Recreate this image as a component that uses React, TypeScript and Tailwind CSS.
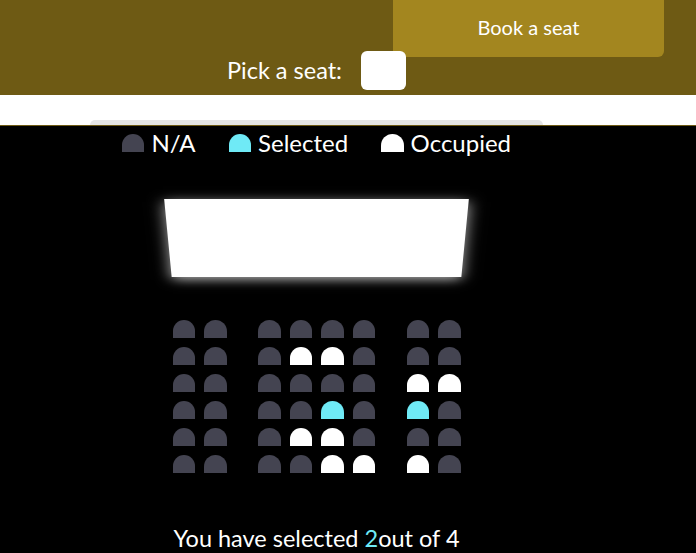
type SeatState = "na" | "sel" | "occ";

const seatColor: Record<SeatState, string> = {
  na: "bg-[#444451]",
  sel: "bg-[#6feaf6]",
  occ: "bg-white",
};

const rows: SeatState[][] = [
  ["na", "na", "na", "na", "na", "na", "na", "na"],
  ["na", "na", "na", "occ", "occ", "na", "na", "na"],
  ["na", "na", "na", "na", "na", "na", "occ", "occ"],
  ["na", "na", "na", "na", "sel", "na", "sel", "na"],
  ["na", "na", "na", "occ", "occ", "na", "na", "na"],
  ["na", "na", "na", "na", "occ", "occ", "occ", "na"],
];

const Seat = ({ state, className = "" }: { state: SeatState; className?: string }) => (
  <div className={`w-[22.5px] h-[18px] rounded-t-[15px] ${seatColor[state]} ${className}`} />
);

const App = () => {
  const selected = rows.flat().filter((s) => s === "sel").length;

  return (
    <div className="w-[696px] h-[553px] overflow-hidden bg-black font-['Lato','Noto_Sans',sans-serif] text-white">
      {/* header */}
      <div className="h-[95px] bg-[#6e5a14]">
        <div className="flex justify-end pr-[32px]">
          <button className="w-[271px] h-[57px] rounded-b-[6px] bg-[#a3861f] text-[20px] text-white pb-[4px]">
            Book a seat
          </button>
        </div>
        <div className="flex items-center h-[39px] mt-[-6px] pl-[227px]">
          <span className="text-[23.5px] leading-none">Pick a seat:</span>
          <div className="relative w-[45px] h-[39px] ml-[19px] rounded-[6px] bg-white" />
        </div>
      </div>

      <div className="h-[30px] bg-white flex flex-col justify-end">
        <div className="w-[453px] h-[5px] ml-[90px] rounded-t-[6px] bg-[#e5e5e5]" />
      </div>

      {/* booking area */}
      <div className="border-t border-[#6e5a14] bg-black">
        <div className="w-[633px] flex flex-col items-center pt-[3px]">
          <ul className="flex items-center gap-[33px] h-[28px]">
            <li className="flex items-center gap-[7px]">
              <Seat state="na" />
              <span className="text-[24px]">N/A</span>
            </li>
            <li className="flex items-center gap-[7px]">
              <Seat state="sel" />
              <span className="text-[24px]">Selected</span>
            </li>
            <li className="flex items-center gap-[7px]">
              <Seat state="occ" />
              <span className="text-[24px]">Occupied</span>
            </li>
          </ul>

          <div className="w-[297px] h-[110px] mt-[27px] bg-white [transform:perspective(1540px)_rotateX(-45deg)] shadow-[0_4px_15px_rgba(255,255,255,0.7)]" />

          <div className="flex flex-col gap-[9px] mt-[26px]">
            {rows.map((row, r) => (
              <div key={r} className="flex gap-[9px]">
                {row.map((s, i) => (
                  <Seat
                    key={i}
                    state={s}
                    className={i === 1 ? "mr-[22.5px]" : i === 6 ? "ml-[22.5px]" : ""}
                  />
                ))}
              </div>
            ))}
          </div>

          <p className="mt-[50px] text-[23.5px] leading-[30px]">
            You have selected <span className="text-[#6feaf6]">{selected}</span>out of 4
          </p>
        </div>
        <div className="h-[2px] bg-[#262626] flex">
          <div className="w-[55px] h-full ml-[163px] bg-[#555555]" />
        </div>
      </div>
    </div>
  );
};

export default App;
